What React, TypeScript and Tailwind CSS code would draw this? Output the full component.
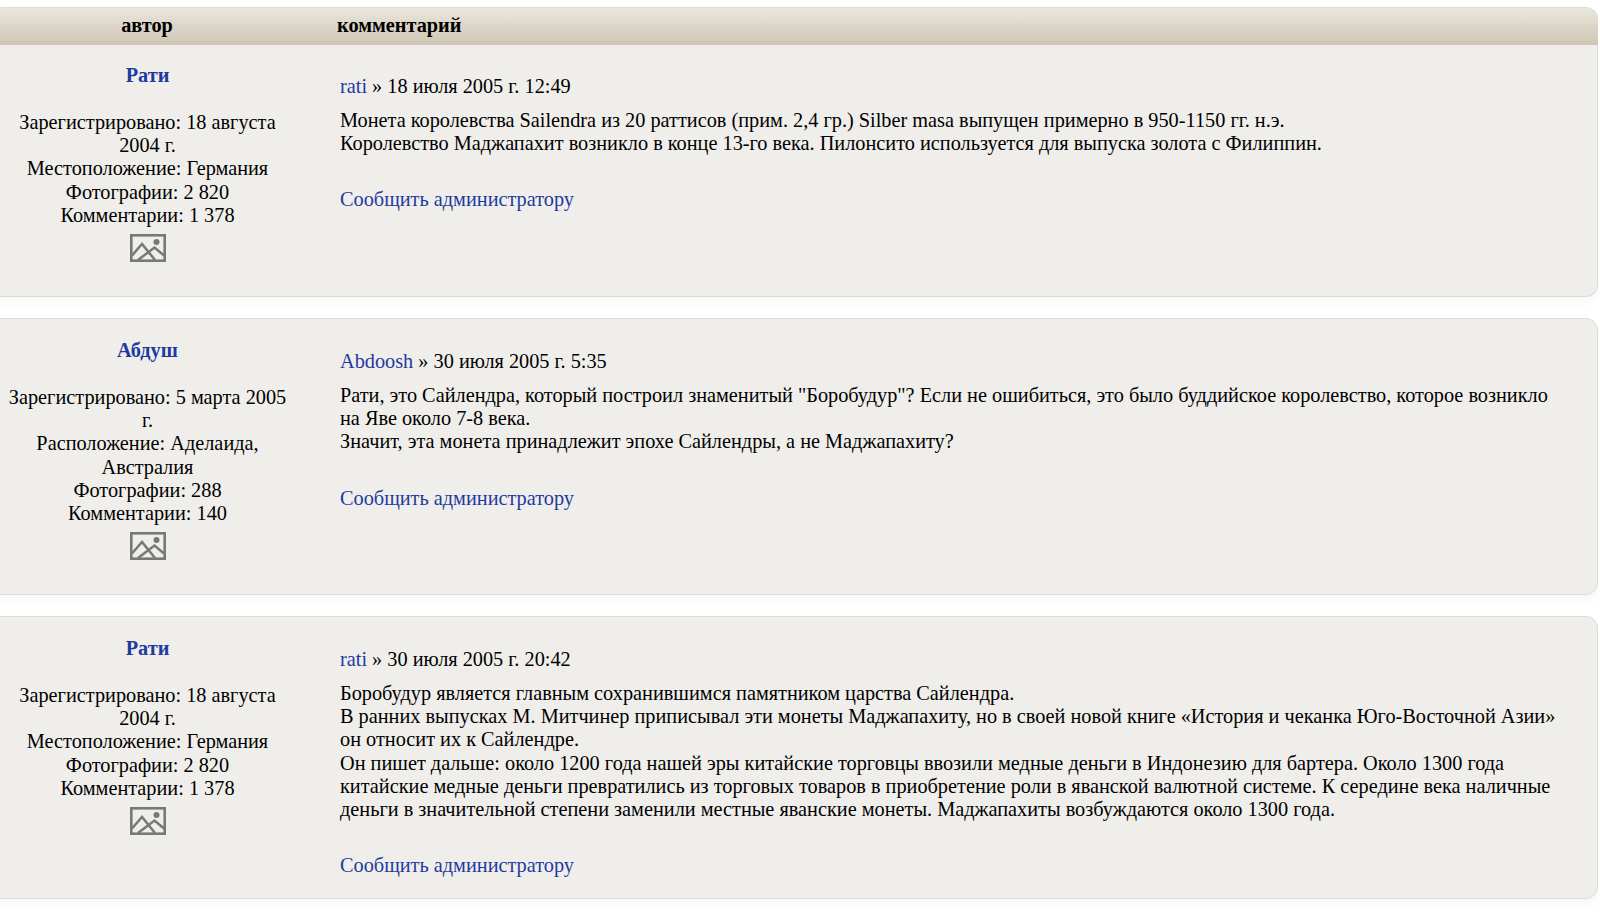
const link = "text-[#1f3a9e]";

function PhotoIcon() {
  return (
    <svg width="36" height="28" viewBox="0 0 36 28" className="block" fill="none" stroke="#787878">
      <rect x="1.3" y="1.3" width="33.4" height="25.4" strokeWidth="2.6" />
      <path d="M2 21.5 L12 10 L25 26 M8 26 L24.5 13.5 L34 21.5" strokeWidth="2.5" />
      <circle cx="26.5" cy="8" r="3" fill="#787878" strokeWidth="0" />
    </svg>
  );
}

type Post = {
  name: string;
  info: string[];
  user: string;
  date: string;
  body: string[];
  cardClass: string;
  leftTop: string;
  rightTop: string;
};

const posts: Post[] = [
  {
    name: "Рати",
    info: ["Зарегистрировано: 18 августа 2004 г.", "Местоположение: Германия", "Фотографии: 2 820", "Комментарии: 1 378"],
    user: "rati",
    date: "18 июля 2005 г. 12:49",
    body: [
      "Монета королевства Sailendra из 20 раттисов (прим. 2,4 гр.) Silber masa выпущен примерно в 950-1150 гг. н.э.",
      "Королевство Маджапахит возникло в конце 13-го века. Пилонсито используется для выпуска золота с Филиппин.",
    ],
    cardClass: "h-[252px] border-t-0 rounded-b-xl",
    leftTop: "pt-[19px]",
    rightTop: "pt-[30px]",
  },
  {
    name: "Абдуш",
    info: ["Зарегистрировано: 5 марта 2005 г.", "Расположение: Аделаида, Австралия", "Фотографии: 288", "Комментарии: 140"],
    user: "Abdoosh",
    date: "30 июля 2005 г. 5:35",
    body: [
      "Рати, это Сайлендра, который построил знаменитый \"Боробудур\"? Если не ошибиться, это было буддийское королевство, которое возникло на Яве около 7-8 века.",
      "Значит, эта монета принадлежит эпохе Сайлендры, а не Маджапахиту?",
    ],
    cardClass: "h-[277px] mt-[21px] rounded-xl",
    leftTop: "pt-[20px]",
    rightTop: "pt-[31px]",
  },
  {
    name: "Рати",
    info: ["Зарегистрировано: 18 августа 2004 г.", "Местоположение: Германия", "Фотографии: 2 820", "Комментарии: 1 378"],
    user: "rati",
    date: "30 июля 2005 г. 20:42",
    body: [
      "Боробудур является главным сохранившимся памятником царства Сайлендра.",
      "В ранних выпусках М. Митчинер приписывал эти монеты Маджапахиту, но в своей новой книге «История и чеканка Юго-Восточной Азии» он относит их к Сайлендре.",
      "Он пишет дальше: около 1200 года нашей эры китайские торговцы ввозили медные деньги в Индонезию для бартера. Около 1300 года китайские медные деньги превратились из торговых товаров в приобретение роли в яванской валютной системе. К середине века наличные деньги в значительной степени заменили местные яванские монеты. Маджапахиты возбуждаются около 1300 года.",
    ],
    cardClass: "h-[283px] mt-[21px] rounded-xl",
    leftTop: "pt-[20px]",
    rightTop: "pt-[31px]",
  },
];

function PostCard({ post }: { post: Post }) {
  return (
    <div
      className={`flex ${post.cardClass} bg-[#f0eeeb] border border-[#dcdbd8] shadow-[0_6px_10px_rgba(0,0,0,0.03)]`}
    >
      <div className={`w-[303px] shrink-0 pl-[14px] pr-[4px] ${post.leftTop} text-center`}>
        <div className={`font-bold leading-[23px] ${link}`}>{post.name}</div>
        <div className="mt-[24px] leading-[23.2px]">
          {post.info.map((line) => (
            <div key={line}>{line}</div>
          ))}
        </div>
        <div className="flex justify-center mt-[7px]">
          <PhotoIcon />
        </div>
      </div>
      <div className={`flex-1 pl-[46px] pr-[34px] ${post.rightTop}`}>
        <div className="leading-[23px]">
          <span className={link}>{post.user}</span> » {post.date}
        </div>
        <div className="mt-[11px] leading-[23.2px]">
          {post.body.map((line) => (
            <div key={line}>{line}</div>
          ))}
        </div>
        <div className={`mt-[33px] leading-[23px] ${link}`}>Сообщить администратору</div>
      </div>
    </div>
  );
}

export default function App() {
  return (
    <div className="w-[1600px] h-[918px] overflow-hidden bg-white text-black font-['Liberation_Serif',serif] text-[20.3px]">
      <div className="pt-[7px] ml-[-10px] mr-[2px]">
        <div className="flex h-[38px] items-center pb-[3px] rounded-t-xl border-t border-[#dddcd6] bg-gradient-to-b from-[#e9e7dc] to-[#cfc5b4] font-bold">
          <div className="w-[303px] shrink-0 pl-[11px] text-center">автор</div>
          <div className="pl-[44px]">комментарий</div>
        </div>
        {posts.map((p, i) => (
          <PostCard key={i} post={p} />
        ))}
      </div>
    </div>
  );
}
